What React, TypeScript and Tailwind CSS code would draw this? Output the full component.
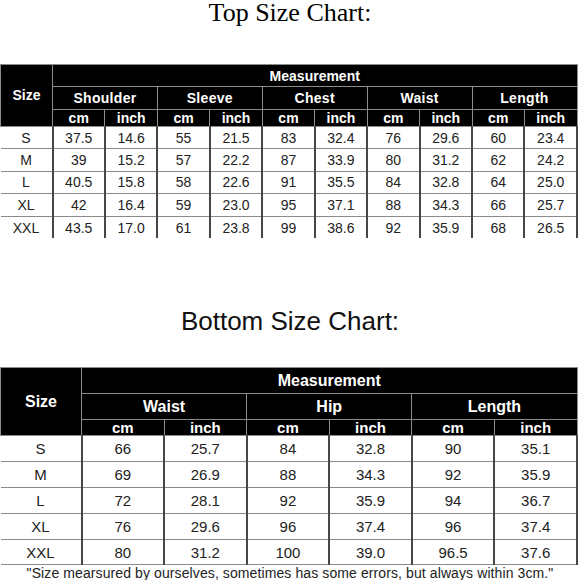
import { Fragment } from "react";

const topGroups = ["Shoulder", "Sleeve", "Chest", "Waist", "Length"];

const topRows: string[][] = [
  ["S", "37.5", "14.6", "55", "21.5", "83", "32.4", "76", "29.6", "60", "23.4"],
  ["M", "39", "15.2", "57", "22.2", "87", "33.9", "80", "31.2", "62", "24.2"],
  ["L", "40.5", "15.8", "58", "22.6", "91", "35.5", "84", "32.8", "64", "25.0"],
  ["XL", "42", "16.4", "59", "23.0", "95", "37.1", "88", "34.3", "66", "25.7"],
  ["XXL", "43.5", "17.0", "61", "23.8", "99", "38.6", "92", "35.9", "68", "26.5"],
];

const bottomGroups = ["Waist", "Hip", "Length"];

const bottomRows: string[][] = [
  ["S", "66", "25.7", "84", "32.8", "90", "35.1"],
  ["M", "69", "26.9", "88", "34.3", "92", "35.9"],
  ["L", "72", "28.1", "92", "35.9", "94", "36.7"],
  ["XL", "76", "29.6", "96", "37.4", "96", "37.4"],
  ["XXL", "80", "31.2", "100", "39.0", "96.5", "37.6"],
];

const head = "bg-black text-white font-bold border border-[#8c8c8c] text-center p-0";

function TopChart() {
  return (
    <div>
      <h2 className="text-center text-[26px] leading-[26px] text-black font-['Liberation_Serif',serif] h-[64px]">
        Top Size Chart:
      </h2>
      <table className="table-fixed border-collapse w-[578px] font-['Liberation_Sans',Arial,sans-serif]">
        <colgroup>
          <col className="w-[52px]" />
          {Array.from({ length: 10 }).map((_, i) => (
            <col key={i} />
          ))}
        </colgroup>
        <thead>
          <tr className="h-[22px]">
            <th rowSpan={3} className={`${head} text-[14px]`}>Size</th>
            <th colSpan={10} className={`${head} text-[14px] leading-none`}>Measurement</th>
          </tr>
          <tr className="h-[23px]">
            {topGroups.map((g) => (
              <th key={g} colSpan={2} className={`${head} text-[14px] leading-none tracking-[0.3px]`}>
                {g}
              </th>
            ))}
          </tr>
          <tr className="h-[17px]">
            {topGroups.map((g) => (
              <Fragment key={g}>
                <th className={`${head} text-[14px] leading-none`}>cm</th>
                <th className={`${head} text-[14px] leading-none`}>inch</th>
              </Fragment>
            ))}
          </tr>
        </thead>
        <tbody>
          {topRows.map((r, ri) => (
            <tr key={r[0]} className="h-[22.4px]">
              {r.map((v, ci) => (
                <td
                  key={ci}
                  className={`p-0 text-center text-[14px] leading-none text-[#222] border-r-2 border-r-[#474747] ${
                    ri < topRows.length - 1 ? "border-b border-b-[#8a8a8a]" : ""
                  }`}
                >
                  {v}
                </td>
              ))}
            </tr>
          ))}
        </tbody>
      </table>
    </div>
  );
}

function BottomChart() {
  return (
    <div className="mt-[67px]">
      <h2 className="text-center text-[26px] leading-[32px] text-[#111] font-['Liberation_Sans',Arial,sans-serif] h-[62px]">
        Bottom Size Chart:
      </h2>
      <table className="table-fixed border-collapse w-[578px] font-['Liberation_Sans',Arial,sans-serif]">
        <colgroup>
          <col className="w-[81px]" />
          {Array.from({ length: 6 }).map((_, i) => (
            <col key={i} />
          ))}
        </colgroup>
        <thead>
          <tr className="h-[26px]">
            <th rowSpan={3} className={`${head} text-[16px]`}>Size</th>
            <th colSpan={6} className={`${head} text-[16px] leading-none`}>Measurement</th>
          </tr>
          <tr className="h-[26px]">
            {bottomGroups.map((g) => (
              <th key={g} colSpan={2} className={`${head} text-[16px] leading-none`}>
                {g}
              </th>
            ))}
          </tr>
          <tr className="h-[16px]">
            {bottomGroups.map((g) => (
              <Fragment key={g}>
                <th className={`${head} text-[15px] leading-none`}>cm</th>
                <th className={`${head} text-[15px] leading-none`}>inch</th>
              </Fragment>
            ))}
          </tr>
        </thead>
        <tbody>
          {bottomRows.map((r) => (
            <tr key={r[0]} className="h-[25.8px]">
              {r.map((v, ci) => (
                <td
                  key={ci}
                  className="p-0 text-center text-[15px] leading-none text-[#222] border-r-2 border-r-[#474747] border-b border-b-[#8a8a8a]"
                >
                  {v}
                </td>
              ))}
            </tr>
          ))}
        </tbody>
      </table>
      <p className="text-center text-[14px] leading-[16px] text-[#222] font-['Liberation_Sans',Arial,sans-serif] tracking-[0.1px]">
        "Size mearsured by ourselves, sometimes has some errors, but always within 3cm."
      </p>
    </div>
  );
}

export default function App() {
  return (
    <div className="w-[580px] h-[580px] bg-white overflow-hidden">
      <TopChart />
      <BottomChart />
    </div>
  );
}
